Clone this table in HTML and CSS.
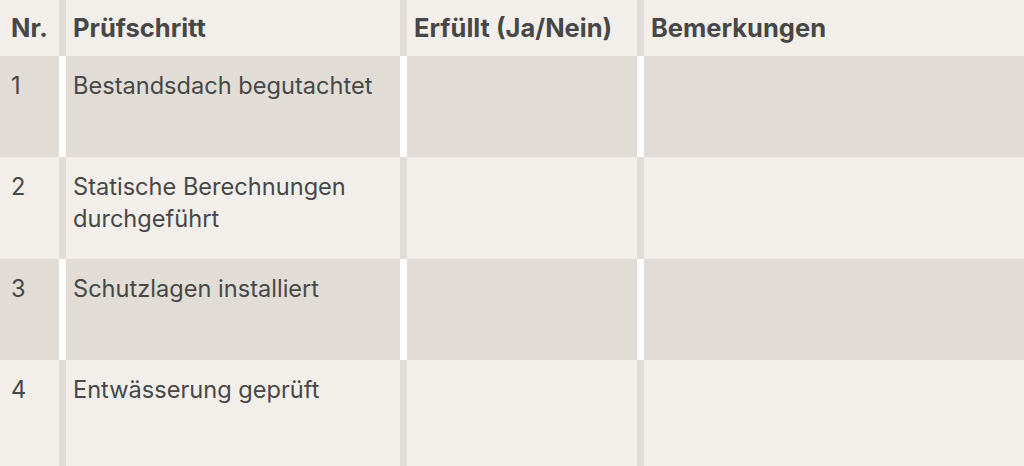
FILE: index.html
```html
<!DOCTYPE html>
<html lang="de">
<head>
<meta charset="utf-8">
<link rel="stylesheet" href="styles.css">
</head>
<body>
<div class="table">
  <div class="row head">
    <div class="cell c-nr">Nr.</div>
    <div class="cell">Prüfschritt</div>
    <div class="cell">Erfüllt (Ja/Nein)</div>
    <div class="cell">Bemerkungen</div>
  </div>
  <div class="row dark">
    <div class="cell c-nr">1</div>
    <div class="cell">Bestandsdach begutachtet</div>
    <div class="cell"></div>
    <div class="cell"></div>
  </div>
  <div class="row light">
    <div class="cell c-nr">2</div>
    <div class="cell">Statische Berechnungen durchgeführt</div>
    <div class="cell"></div>
    <div class="cell"></div>
  </div>
  <div class="row dark">
    <div class="cell c-nr">3</div>
    <div class="cell">Schutzlagen installiert</div>
    <div class="cell"></div>
    <div class="cell"></div>
  </div>
  <div class="row light last">
    <div class="cell c-nr">4</div>
    <div class="cell">Entwässerung geprüft</div>
    <div class="cell"></div>
    <div class="cell"></div>
  </div>
</div>
</body>
</html>
```

FILE: styles.css
```css
html, body {
  margin: 0;
  padding: 0;
  overflow: hidden;
  background: #f2efeb;
}
body {
  font-family: "Inter", "Liberation Sans", sans-serif;
  color: #474747;
  width: 1024px;
  height: 466px;
}
.table {
  display: flex;
  flex-direction: column;
}
.row {
  display: grid;
  grid-template-columns: 59px 334px 230px 1fr;
  column-gap: 7px;
}
.head, .light {
  background: #e1ddd6;
}
.dark {
  background: #ffffff;
}
.cell {
  box-sizing: border-box;
  padding: 14px 7px 0 7px;
  font-size: 23.6px;
  line-height: 32px;
}
.c-nr {
  padding-left: 11px;
}
.head .cell {
  background: #f2efeb;
  height: 56px;
  padding-top: 12px;
  font-size: 25.5px;
  font-weight: 700;
}
.dark .cell {
  background: #e1ddd6;
  height: 101px;
}
.light .cell {
  background: #f2efeb;
  height: 102px;
}
.last .cell {
  height: 110px;
}
```
